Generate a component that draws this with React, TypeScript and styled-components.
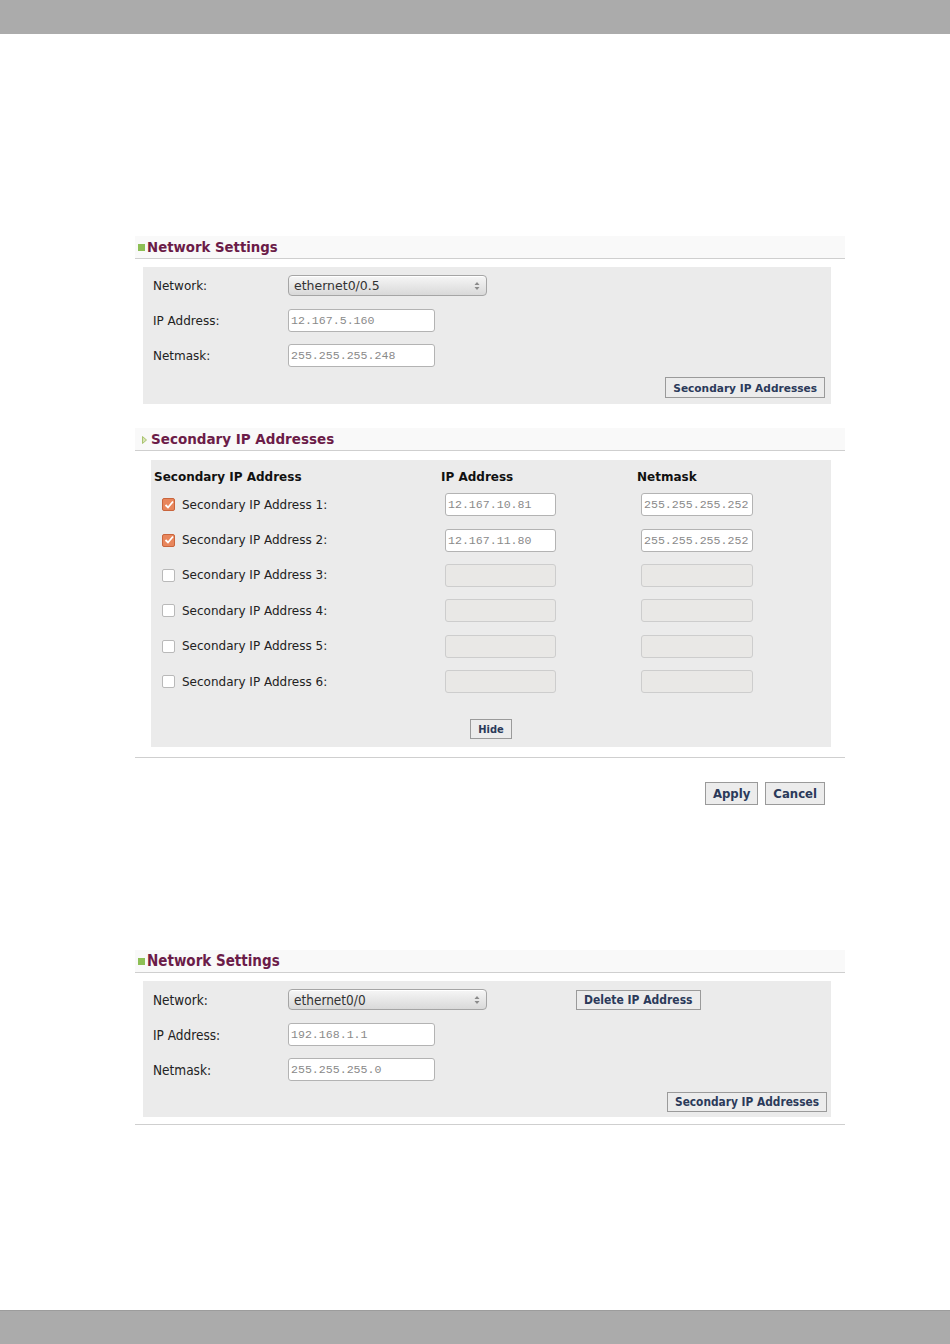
import React from 'react'
import styled, { createGlobalStyle, css } from 'styled-components'

const GlobalStyle = createGlobalStyle`
  html, body {
    margin: 0;
    padding: 0;
    background: #ffffff;
  }
  body {
    font-family: 'DejaVu Sans', 'Liberation Sans', sans-serif;
    color: #222;
  }
`

const condensed = css`
  font-family: 'DejaVu Sans Condensed', 'DejaVu Sans', sans-serif;
  font-stretch: condensed;
`

const Page = styled.div`
  display: flex;
  flex-direction: column;
  min-height: 1344px;
`

const Bar = styled.div<{ $bottom?: boolean }>`
  height: ${(p) => (p.$bottom ? '33px' : '34px')};
  background: #ababab;
  flex-shrink: 0;
  ${(p) =>
    p.$bottom &&
    css`
      margin-top: auto;
      border-top: 1px solid #9c9c9c;
    `}
`

const Content = styled.div`
  width: 710px;
  margin-left: 135px;
  display: flex;
  flex-direction: column;
`

const Section = styled.section<{ $top: number; $line?: number }>`
  margin-top: ${(p) => p.$top}px;
  ${(p) =>
    p.$line !== undefined &&
    css`
      padding-bottom: ${p.$line}px;
      border-bottom: 1px solid #cfcfcf;
    `}
`

const Header = styled.div`
  height: 22px;
  display: flex;
  align-items: center;
  background: #f9f9f9;
  border-bottom: 1px solid #cfcfcf;
`

const Title = styled.h2<{ $size: number; $cond?: boolean }>`
  margin: 0;
  font-size: ${(p) => p.$size}px;
  font-weight: bold;
  color: #6b1c48;
  ${(p) => p.$cond && condensed}
`

const Square = styled.span`
  width: 7px;
  height: 7px;
  background: #8dbf55;
  margin: 1px 2px 0 3px;
`

const Triangle = styled.svg`
  margin: 1px 4px 0 7px;
`

const Panel = styled.div<{ $left: number; $top: number; $pad: string }>`
  margin: ${(p) => p.$top}px 14px 0 ${(p) => p.$left}px;
  padding: ${(p) => p.$pad};
  background: #ebebeb;
`

const FormRow = styled.div`
  height: 35px;
  display: flex;
  align-items: center;
`

const Label = styled.span<{ $cond?: boolean }>`
  width: 135px;
  font-size: 12px;
  color: #222;
  ${(p) =>
    p.$cond &&
    css`
      ${condensed};
      font-size: 13.5px;
    `}
`

const Select = styled.div<{ $cond?: boolean }>`
  width: 199px;
  height: 21px;
  box-sizing: border-box;
  border: 1px solid #a5a5a5;
  border-radius: 4px;
  background: linear-gradient(#f6f6f6, #d9d9d9);
  box-shadow: inset 0 1px 0 #fff;
  display: flex;
  align-items: center;
  justify-content: space-between;
  padding: 0 6px 0 5px;
  font-size: 12.5px;
  color: #333;
  ${(p) =>
    p.$cond &&
    css`
      ${condensed};
      font-size: 13.5px;
    `}
`

const Arrows = () => (
  <svg width="6" height="10" viewBox="0 0 6 10">
    <path d="M3 1 L5.5 4 L0.5 4 Z" fill="#8a8a8a" />
    <path d="M3 9 L5.5 6 L0.5 6 Z" fill="#8a8a8a" />
  </svg>
)

const Input = styled.div<{ $w: number; $disabled?: boolean }>`
  width: ${(p) => p.$w}px;
  height: 23px;
  box-sizing: border-box;
  border: 1px solid ${(p) => (p.$disabled ? '#cdcdcd' : '#b3b3b3')};
  border-radius: 3px;
  background: ${(p) => (p.$disabled ? '#e9e8e6' : '#ffffff')};
  display: flex;
  align-items: center;
  padding-left: 2px;
  font-family: 'Liberation Mono', 'DejaVu Sans Mono', monospace;
  font-size: 11.6px;
  color: #8a8a8a;
  white-space: nowrap;
  overflow: hidden;
`

const Button = styled.button<{ $size?: number; $h?: number; $cond?: boolean; $gap?: number }>`
  height: ${(p) => p.$h ?? 21}px;
  box-sizing: border-box;
  padding: 0 7px;
  margin-left: ${(p) => p.$gap ?? 0}px;
  border: 1px solid #9a9a9a;
  border-radius: 0;
  background: #ececec;
  color: #2b3a5a;
  font-family: 'DejaVu Sans', sans-serif;
  font-weight: bold;
  font-size: ${(p) => p.$size ?? 10.6}px;
  cursor: pointer;
  ${(p) => p.$cond && condensed}
`

const ButtonRow = styled.div<{ $top: number; $align?: string; $right?: number }>`
  display: flex;
  justify-content: ${(p) => p.$align ?? 'flex-end'};
  gap: 7px;
  margin-top: ${(p) => p.$top}px;
  padding-right: ${(p) => p.$right ?? 0}px;
`

const Grid = styled.div`
  display: grid;
  grid-template-columns: 287px 196px 1fr;
`

const ColHead = styled.div`
  height: 20px;
  display: flex;
  align-items: center;
  font-size: 12px;
  font-weight: bold;
  color: #111;
`

const Cell = styled.div<{ $pad: number }>`
  height: 35.4px;
  display: flex;
  align-items: center;
  padding-left: ${(p) => p.$pad}px;
  font-size: 12px;
  color: #222;
`

const Box = styled.span<{ $on: boolean }>`
  width: 13px;
  height: 13px;
  box-sizing: border-box;
  border-radius: 2px;
  margin-right: 7px;
  display: flex;
  align-items: center;
  justify-content: center;
  border: 1px solid ${(p) => (p.$on ? '#c9653d' : '#b9b9b9')};
  background: ${(p) => (p.$on ? '#e8865c' : '#ffffff')};
`

const Check = () => (
  <svg width="10" height="10" viewBox="0 0 10 10">
    <path d="M1.5 5 L4 7.5 L9 1.5" fill="none" stroke="#fff" strokeWidth="1.8" />
  </svg>
)

const secondary = [
  { ip: '12.167.10.81', mask: '255.255.255.252', on: true },
  { ip: '12.167.11.80', mask: '255.255.255.252', on: true },
  { ip: '', mask: '', on: false },
  { ip: '', mask: '', on: false },
  { ip: '', mask: '', on: false },
  { ip: '', mask: '', on: false },
]

export default function App() {
  return (
    <Page>
      <GlobalStyle />
      <Bar />
      <Content>
        <Section $top={202}>
          <Header>
            <Square />
            <Title $size={13.3}>Network Settings</Title>
          </Header>
          <Panel $left={8} $top={8} $pad="1px 6px 6px 10px">
            <FormRow>
              <Label>Network:</Label>
              <Select>
                <span>ethernet0/0.5</span>
                <Arrows />
              </Select>
            </FormRow>
            <FormRow>
              <Label>IP Address:</Label>
              <Input $w={147}>12.167.5.160</Input>
            </FormRow>
            <FormRow>
              <Label>Netmask:</Label>
              <Input $w={147}>255.255.255.248</Input>
            </FormRow>
            <ButtonRow $top={4}>
              <Button>Secondary IP Addresses</Button>
            </ButtonRow>
          </Panel>
        </Section>

        <Section $top={24} $line={10}>
          <Header>
            <Triangle width="5" height="8" viewBox="0 0 5 8">
              <path d="M0.5 0.5 L4.5 4 L0.5 7.5 Z" fill="#d7e4b4" stroke="#a9c36f" strokeWidth="1" />
            </Triangle>
            <Title $size={13.5}>Secondary IP Addresses</Title>
          </Header>
          <Panel $left={16} $top={9} $pad="7px 0 8px 3px">
            <Grid>
              <ColHead>Secondary IP Address</ColHead>
              <ColHead>IP Address</ColHead>
              <ColHead>Netmask</ColHead>
              {secondary.map((row, i) => (
                <React.Fragment key={i}>
                  <Cell $pad={8}>
                    <Box $on={row.on}>{row.on && <Check />}</Box>
                    Secondary IP Address {i + 1}:
                  </Cell>
                  <Cell $pad={4}>
                    <Input $w={111} $disabled={!row.on}>
                      {row.ip}
                    </Input>
                  </Cell>
                  <Cell $pad={4}>
                    <Input $w={112} $disabled={!row.on}>
                      {row.mask}
                    </Input>
                  </Cell>
                </React.Fragment>
              ))}
            </Grid>
            <ButtonRow $top={20} $align="center" $right={3}>
              <Button $h={20} $size={11} $cond>
                Hide
              </Button>
            </ButtonRow>
          </Panel>
        </Section>

        <ButtonRow $top={24} $right={20}>
          <Button $h={23} $size={13} $cond>
            Apply
          </Button>
          <Button $h={23} $size={13} $cond>
            Cancel
          </Button>
        </ButtonRow>

        <Section $top={145} $line={7}>
          <Header>
            <Square />
            <Title $size={15} $cond>
              Network Settings
            </Title>
          </Header>
          <Panel $left={8} $top={8} $pad="1px 4px 5px 10px">
            <FormRow>
              <Label $cond>Network:</Label>
              <Select $cond>
                <span>ethernet0/0</span>
                <Arrows />
              </Select>
              <Button $h={20} $size={12} $cond $gap={89}>
                Delete IP Address
              </Button>
            </FormRow>
            <FormRow>
              <Label $cond>IP Address:</Label>
              <Input $w={147}>192.168.1.1</Input>
            </FormRow>
            <FormRow>
              <Label $cond>Netmask:</Label>
              <Input $w={147}>255.255.255.0</Input>
            </FormRow>
            <ButtonRow $top={5}>
              <Button $h={20} $size={11.8} $cond>
                Secondary IP Addresses
              </Button>
            </ButtonRow>
          </Panel>
        </Section>
      </Content>
      <Bar $bottom />
    </Page>
  )
}
